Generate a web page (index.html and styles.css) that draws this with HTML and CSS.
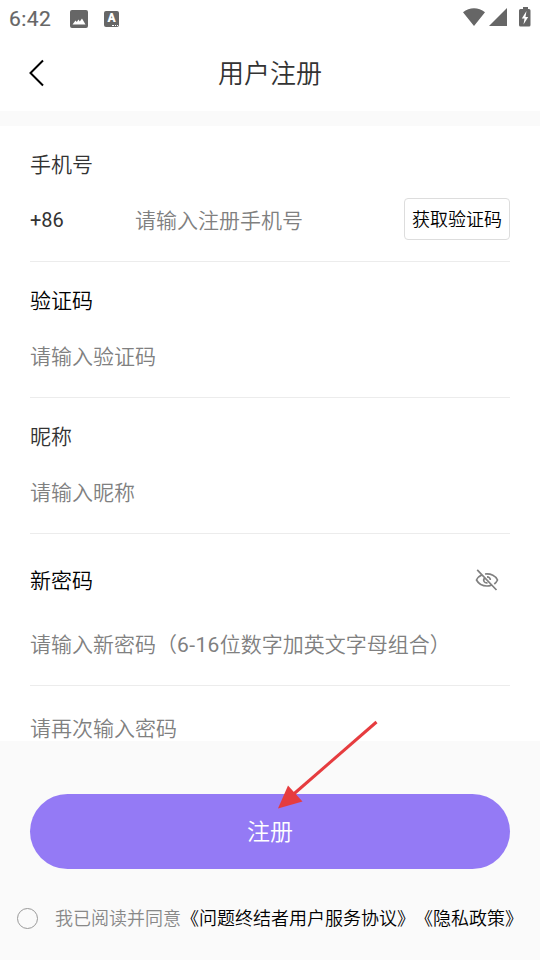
FILE: index.html
```html
<!DOCTYPE html>
<html lang="zh-CN">
<head>
<meta charset="utf-8">
<title>用户注册</title>
<link rel="stylesheet" href="styles.css">
</head>
<body>
<div class="screen">
  <div class="status">
    <span class="clock">6:42</span>
    <svg class="s-image" width="18" height="18" viewBox="0 0 18 18"><path fill="#666" fill-rule="evenodd" d="M2 0h14a2 2 0 0 1 2 2v14a2 2 0 0 1-2 2H2a2 2 0 0 1-2-2V2a2 2 0 0 1 2-2ZM2.500 14.500h13L12 8.500 9.800 11.500 8.500 9.500 6.800 12 5.500 10.500Z"/></svg>
    <span class="s-lang">A<i></i></span>
    <svg class="s-right" width="68" height="22" viewBox="0 0 68 22"><path fill="#666" d="M0 5.200C6.600-.2 15.400-.2 22 5.200L11 19ZM44 1v18H26ZM58 2h2V0h5v2H66q1.500 0 1.500 1.500v14.500q0 1.500-1.500 1.500h-8.500q-1.500 0-1.500-1.500V3.500Q56 2 57.500 2Z"/><path fill="#fff" d="M63.500 4 58.800 11.500h2.700L60.500 17.500 65.200 10h-2.700Z"/></svg>
  </div>
  <header class="nav">
    <svg class="back" width="16" height="28" viewBox="0 0 16 28"><path d="M14 1.500 1.500 14 14 26.500" fill="none" stroke="#000" stroke-width="2"/></svg>
    <h1>用户注册</h1>
  </header>
  <main class="form">
    <section class="field">
      <div class="label soft">手机号</div>
      <div class="row">
        <span class="code">+86</span>
        <span class="hint">请输入注册手机号</span>
        <button class="send">获取验证码</button>
      </div>
    </section>
    <section class="field">
      <div class="label">验证码</div>
      <div class="row"><span class="hint">请输入验证码</span></div>
    </section>
    <section class="field">
      <div class="label soft">昵称</div>
      <div class="row"><span class="hint">请输入昵称</span></div>
    </section>
    <section class="field password">
      <div class="label">新密码
        <svg class="eye" width="24" height="24" viewBox="0 0 24 24" fill="none" stroke="#808080" stroke-width="1.700"><path d="M7.300 6.700C4.600 7.800 2.500 9.800 1.500 12c2 3.700 6 6 10.500 6 1.500 0 2.900-.3 4.200-.8M10 6c6-.7 10.800 2 12.500 6-.7 1.600-1.800 2.900-3.200 4M9.300 10.200c-1.700 2.300.2 5.200 3.200 4.700M12 8.800c2 0 3.400 1.500 3.300 3.200M2.200 1.800 21.500 22"/></svg>
      </div>
      <div class="row"><span class="hint">请输入新密码（<span class="range">6-16</span>位数字加英文字母组合）</span></div>
    </section>
    <div class="repeat hint">请再次输入密码</div>
  </main>
  <footer class="footer">
    <button class="submit">注册</button>
    <div class="agree"><span class="radio"></span><span class="terms">我已阅读并同意<b>《问题终结者用户服务协议》《隐私政策》</b></span></div>
  </footer>
  <svg class="arrow" width="100" height="90" viewBox="0 0 100 90"><path d="M98.500 2 14 75.500" stroke="#e63c3f" stroke-width="3"/><path d="M0 88.500 10 65.500 24.500 81.500Z" fill="#e63c3f"/></svg>
</div>
</body>
</html>
```
FILE: styles.css
```css
* { box-sizing: border-box; }
body { margin: 0; background: #fafafa; font-family: Roboto, "Noto Sans CJK SC DemiLight", "Noto Sans CJK SC", sans-serif; text-spacing-trim: space-all; }
.screen { position: relative; width: 540px; height: 960px; overflow: hidden; display: flex; flex-direction: column; }
svg { display: block; flex: none; }
button { border: 0; margin: 0; padding: 0; font-family: inherit; }
.status { height: 36px; flex: none; background: #fff; display: flex; align-items: center; padding: 0 9px 0 9px; }
.clock { width: 61px; font-size: 21px; line-height: 36px; color: #666; font-weight: 400; letter-spacing: 0.4px; padding-top: 2px; -webkit-text-stroke: 0.2px #666; }
.s-image { margin-top: 1px; }
.s-lang { position: relative; width: 15px; height: 16px; margin-left: 16px; margin-top: 1px; border-radius: 2px; background: #666; color: #fff; font: 900 12px/15px Roboto, sans-serif; text-align: center; }
.s-lang i { position: absolute; right: 1px; bottom: 1px; width: 6px; border-bottom: 1px dotted #fff; }
.s-right { margin-left: auto; margin-top: -1px; }
.nav { height: 75px; flex: none; background: #fff; display: flex; align-items: center; padding: 0 30px 2px 29px; }
.nav h1 { flex: 1; margin: 2px 15px 0 0; text-align: center; font-size: 26px; line-height: 38px; font-weight: 400; color: #333; }
.form { height: 615px; flex: none; margin-top: 15px; padding: 0 30px; background: #fff; overflow: hidden; }
.field { height: 136px; border-bottom: 1px solid #ececec; padding-top: 21px; }
.label { height: 36px; font-size: 21px; line-height: 36px; color: #000; display: flex; align-items: center; justify-content: space-between; }
.soft { color: #333; }
.row { height: 72px; display: flex; align-items: center; }
.hint { font-size: 21px; color: #808080; white-space: nowrap; }
.range { letter-spacing: 0.4px; }
.code { width: 105px; padding-top: 2px; font-size: 20px; color: #333; }
.send { width: 106px; height: 42px; margin-left: auto; padding-bottom: 3px; border: 1px solid #ddd; border-radius: 4px; background: #fff; font-size: 18px; color: #000; }
.password { height: 152px; padding-top: 29px; }
.password .row { height: 88px; }
.eye { margin: -2px 11px 0 0; }
.repeat { height: 87px; line-height: 87px; }
.footer { flex: 1; padding-top: 53px; }
.submit { display: block; width: 480px; height: 75px; margin: 0 30px; padding-bottom: 3px; border-radius: 38px; background: #947af5; color: #fff; font-size: 23px; }
.agree { display: flex; align-items: center; height: 36px; margin-top: 31px; padding-left: 17px; }
.radio { width: 21px; height: 21px; border: 1px solid #999; border-radius: 50%; }
.terms { margin: 2px 0 0 17px; font-size: 18px; line-height: 36px; color: #888; white-space: nowrap; }
.terms b { color: #000; font-weight: 400; }
.arrow { position: absolute; left: 278px; top: 720px; }
```
